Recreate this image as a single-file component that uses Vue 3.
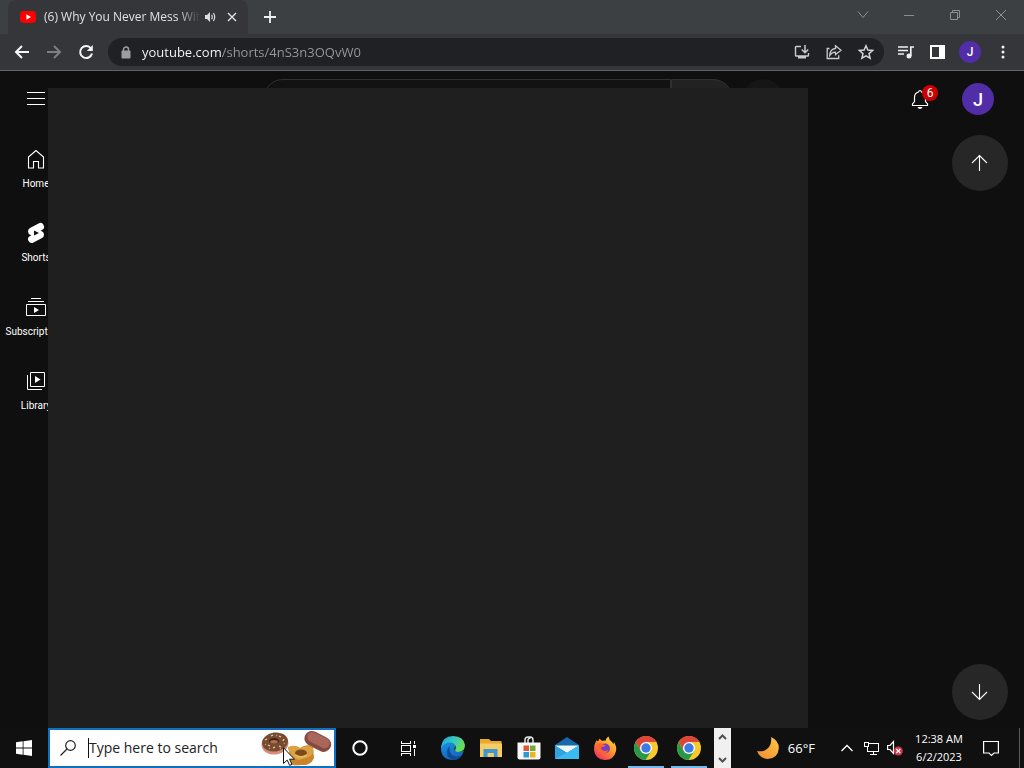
<script setup>
import { ref } from 'vue'

const url = ref('youtube.com/shorts/4nS3n3OQvW0')
const query = ref('')
const taskQuery = ref('')
const nav = ['Home', 'Shorts', 'Subscriptions', 'Library']
const browsers = ['Chrome window 1', 'Chrome window 2']
</script>

<template>
  <div class="desktop">
    <header class="tabs">
      <div class="tab">
        <svg class="fav" width="16" height="12" viewBox="0 0 16 12"><rect width="16" height="12" rx="4" fill="#f00" /><path d="M6.4 3.3 11 6 6.4 8.7z" fill="#fff" /></svg>
        <span class="tab-title">(6) Why You Never Mess With</span>
        <button class="plain" aria-label="Mute tab">
          <svg width="12" height="12" viewBox="0 0 12 12"><path d="M1 4h2l3-3v10L3 8H1z" fill="#dcdde0" /><path d="M7.6 3.8q1.4 2.2 0 4.4M9.4 2q2.6 4 0 8" fill="none" stroke="#dcdde0" stroke-width="1.2" /></svg>
        </button>
        <button class="plain close" aria-label="Close tab">
          <svg width="10" height="10" viewBox="0 0 10 10"><path d="M1 1l8 8M9 1L1 9" stroke="#e2e3e5" stroke-width="1.4" /></svg>
        </button>
      </div>
      <button class="plain plus" aria-label="New tab">
        <svg width="12" height="12" viewBox="0 0 12 12"><path d="M6 0v12M0 6h12" stroke="#eef0f1" stroke-width="1.8" /></svg>
      </button>
      <div class="win">
        <button class="plain" aria-label="Search tabs"><svg width="12" height="12" viewBox="0 0 12 12"><path d="M1 2.5l5 6 5-6" /></svg></button>
        <button class="plain" aria-label="Minimize"><svg width="12" height="12" viewBox="0 0 12 12"><path d="M1 6.5h10" /></svg></button>
        <button class="plain" aria-label="Restore"><svg width="12" height="12" viewBox="0 0 12 12"><path d="M1.5 3.5h7v7h-7zM3.5 3.5v-2h7v7h-2" /></svg></button>
        <button class="plain" aria-label="Close"><svg width="12" height="12" viewBox="0 0 12 12"><path d="M1 1l10 10M11 1L1 11" /></svg></button>
      </div>
    </header>

    <div class="toolbar">
      <button class="plain tool" aria-label="Back"><svg width="16" height="16" viewBox="0 0 16 16"><path d="M15 8H2.5M8 2L2 8l6 6" fill="none" stroke="#f4f5f6" stroke-width="2" /></svg></button>
      <button class="plain tool" aria-label="Forward"><svg width="16" height="16" viewBox="0 0 16 16"><path d="M1 8h12.500M8 2l6 6-6 6" fill="none" stroke="#7d7f83" stroke-width="2" /></svg></button>
      <button class="plain tool" aria-label="Reload"><svg width="16" height="16" viewBox="0 0 16 16"><path d="M13 4.500A6 6 0 1 0 14 9.500" fill="none" stroke="#f4f5f6" stroke-width="2" /><path d="M14.800 1v6h-6z" fill="#f4f5f6" /></svg></button>
      <div class="omni">
        <svg class="lock" width="10" height="13" viewBox="0 0 10 13"><rect x="0.500" y="4.500" width="9" height="8" rx="1" fill="#9b9da1" /><path d="M2.500 5V3.500a2.500 2.500 0 0 1 5 0V5" fill="none" stroke="#9b9da1" stroke-width="1.500" /></svg>
        <input v-model="url" class="url" type="text" aria-label="Address" />
        <button class="plain" aria-label="Install"><svg width="16" height="16" viewBox="0 0 16 16"><path d="M7 2.500H2.200Q1.500 2.500 1.500 3.300v7.900q0 .8.800.8h11.400q.8 0 .8-.8V9" fill="none" stroke="#c9cbce" stroke-width="1.400" /><path d="M4 12h8v2.500H4z" fill="#c9cbce" /><path d="M11 1v7M7.800 5.500L11 8.700l3.200-3.200" fill="none" stroke="#c9cbce" stroke-width="1.500" /></svg></button>
        <button class="plain" aria-label="Share"><svg width="16" height="16" viewBox="0 0 16 16"><path d="M3.500 4.500h-2.300v10h11.500v-3.300" fill="none" stroke="#c9cbce" stroke-width="1.300" /><path d="M9.500 1.800L15 6.300l-5.500 4.400V8.200Q6 8 3.700 11.500 4 5 9.500 4.500z" fill="none" stroke="#c9cbce" stroke-width="1.300" /></svg></button>
        <button class="plain" aria-label="Bookmark"><svg width="16" height="16" viewBox="0 0 16 16"><path d="M8 1.800l1.900 4.300 4.700.4-3.600 3.100 1.100 4.600L8 11.800l-4.100 2.400L5 9.600 1.400 6.500l4.700-.4z" fill="none" stroke="#d4d5d8" stroke-width="1.500" /></svg></button>
      </div>
      <div class="ext">
        <button class="plain" aria-label="Media"><svg width="16" height="14" viewBox="0 0 16 14"><path d="M0 2h10M0 5.500h10M0 9h6M12.800 11V2H16" fill="none" stroke="#f0f1f2" stroke-width="1.700" /><circle cx="11" cy="11" r="2.500" fill="#f0f1f2" /></svg></button>
        <button class="plain" aria-label="Side panel"><svg width="15" height="14" viewBox="0 0 15 14"><path d="M1 1h13v12H1z" fill="none" stroke="#fff" stroke-width="2" /><path d="M9 1h5v12H9z" fill="#fff" /></svg></button>
        <button class="plain me small" aria-label="Profile">J</button>
        <button class="plain" aria-label="More"><svg width="4" height="14" viewBox="0 0 4 14" fill="#f0f1f2"><circle cx="2" cy="2" r="1.500" /><circle cx="2" cy="7" r="1.500" /><circle cx="2" cy="12" r="1.500" /></svg></button>
      </div>
    </div>

    <main class="page">
      <div class="mast">
        <button class="plain menu" aria-label="Menu"><svg width="18" height="14" viewBox="0 0 18 14"><path d="M0 .5h18M0 6.500h18M0 12.500h18" stroke="#fff" stroke-width="1" shape-rendering="crispEdges" /></svg></button>
        <form class="search" @submit.prevent>
          <input v-model="query" type="text" aria-label="Search videos" />
          <button aria-label="Search"></button>
        </form>
        <button class="plain mic" aria-label="Voice search"></button>
        <button class="plain bell" aria-label="Notifications">
          <svg width="18" height="20" viewBox="0 0 18 20"><path d="M1.500 16.500V15l2-2.500V8.500q0-4.500 4-5.500Q8 1.500 9 1.500t1.500 1.500q4 1 4 5.500v4l2 2.500v1.500z" fill="none" stroke="#fff" stroke-width="1.200" /><path d="M6.500 18h5q-.7 2-2.500 2t-2.500-2z" fill="#fff" /></svg>
          <span class="badge">6</span>
        </button>
        <button class="plain me" aria-label="Account">J</button>
      </div>
      <div class="body">
        <nav class="side">
          <a v-for="(n, i) in nav" :key="n" href="#">
            <svg width="24" height="24" viewBox="0 0 24 24" fill="none" stroke="#fff">
              <path v-if="i === 0" d="M12 3.500l-7.500 6.500v11h5v-6.500h5v6.500h5V10z" stroke-width="1.100" />
              <template v-else-if="i === 1"><path d="M17.770 10.320l-1.200-.5L18 9.060a3.740 3.740 0 0 0-3.500-6.620L6 6.940a3.740 3.740 0 0 0 .23 6.740l1.200.49L6 14.930a3.750 3.750 0 0 0 3.500 6.630l8.500-4.500a3.740 3.740 0 0 0-.23-6.740z" fill="#fff" stroke="none" /><path d="M10 14.500v-5l5 2.500z" fill="#111" stroke="none" /></template>
              <template v-else-if="i === 2"><path d="M7 3.500h10M4 6.500h16M2.500 9.500h19v11h-19z" /><path d="M10 18v-6l5 3z" fill="#fff" stroke="none" /></template>
              <template v-else><path d="M6.500 3.500h14v14h-14zM3.500 6v14.500H18" /><path d="M11 14V7l5.500 3.500z" fill="#fff" stroke="none" /></template>
            </svg>
            <span>{{ n }}</span>
          </a>
        </nav>
        <div class="jump">
          <button class="plain" aria-label="Previous video"><svg width="24" height="24" viewBox="0 0 24 24"><path d="M11.500 20V4.500M4 12l7.500-7.500L19 12" /></svg></button>
          <button class="plain" aria-label="Next video"><svg width="24" height="24" viewBox="0 0 24 24"><path d="M11.500 4v15.500M4 12l7.500 7.500L19 12" /></svg></button>
        </div>
      </div>
      <div class="flyout"></div>
    </main>

    <footer class="task">
      <button class="plain start" aria-label="Start"><svg width="16" height="16" viewBox="0 0 16 16"><path d="M0 2.300L6.700 1.300v6.300H0zM7.500 1.200L16 0v7.600H7.500zM0 8.400h6.700v6.300L0 13.700zM7.500 8.400H16V16l-8.500-1.200z" fill="#fff" /></svg></button>
      <div class="find">
        <svg class="glass" width="16" height="16" viewBox="0 0 16 16"><circle cx="10.500" cy="5.500" r="4.800" fill="none" stroke="#222" stroke-width="1.200" /><path d="M7 9L.500 15.500" stroke="#222" stroke-width="1.200" /></svg>
        <input v-model="taskQuery" type="text" placeholder="Type here to search" aria-label="Type here to search" />
        <svg class="treats" width="74" height="36" viewBox="0 0 74 36">
          <ellipse cx="15" cy="14" rx="13.500" ry="10.500" fill="#d78b78" transform="rotate(-8 15 14)" />
          <ellipse cx="15" cy="12" rx="13" ry="9.500" fill="#7a4a30" transform="rotate(-8 15 12)" />
          <ellipse cx="14" cy="11" rx="5" ry="3" fill="#40241a" />
          <ellipse cx="14" cy="11.800" rx="3.800" ry="1.900" fill="#a9744e" />
          <path d="M5 10l2-1M8 15l2 1M19 6l2 1M23 11l1-2M13 18l2-1M11 6l2-1M19 16l2 1" stroke="#e9d68b" stroke-width="1.300" />
          <path d="M5 14l1 1M24 14l1-1M16 5l1 1M20 19l1-1M9 18l1 1" stroke="#6fae9a" stroke-width="1.300" />
          <rect x="44" y="4" width="28" height="15" rx="7.500" fill="#86483f" transform="rotate(27 58 11)" />
          <rect x="46" y="5" width="24" height="10" rx="5" fill="#a9665b" transform="rotate(27 58 11)" />
          <path d="M28 18q6-4 12 0 7-5 13-1l1 11q-3 8-13 7-12 2-14-7 4-3 1-10z" fill="#c9852c" />
          <path d="M28 17q7-3 12 1 7-4 13 0 2 6-4 9l-10 3q-9-1-11-13z" fill="#dba244" />
          <ellipse cx="41" cy="23" rx="6" ry="3.500" fill="#7c4b18" /><path d="M35 25q6 4 12 0" fill="none" stroke="#e9b85c" stroke-width="2" />
        </svg>
        <svg class="pointer" width="12" height="19" viewBox="0 0 12 19"><path d="M.500 .800v15.700l3.700-3.400 2.500 5.300 2.300-1-2.400-5.200h4.900z" fill="#fff" stroke="#111" /></svg>
      </div>
      <button class="plain wide" aria-label="Cortana"><svg width="16" height="16" viewBox="0 0 16 16"><circle cx="8" cy="8" r="6.700" fill="none" stroke="#fff" stroke-width="2" /></svg></button>
      <button class="plain wide" aria-label="Task view"><svg width="17" height="17" viewBox="0 0 17 17" fill="none" stroke="#fff" shape-rendering="crispEdges"><path d="M1.500 1v2.500h9V1M1.500 16v-2.500h9V16M1.500 5.500h9v6h-9zM14.500 1v3M14.500 9v7" /><path d="M13 5h3v3h-3z" fill="#fff" stroke="none" /></svg></button>
      <div class="apps">
        <button class="plain" aria-label="Edge"><svg width="24" height="24" viewBox="0 0 24 24">
          <defs>
            <linearGradient id="eg" x1="0" y1="0" x2="1" y2="0.500"><stop offset="0" stop-color="#1c9fe0" /><stop offset="0.500" stop-color="#36c6c5" /><stop offset="1" stop-color="#6ade54" /></linearGradient>
            <linearGradient id="eb" x1="0" y1="0" x2="0.400" y2="1"><stop offset="0" stop-color="#1b94e0" /><stop offset="1" stop-color="#1464c0" /></linearGradient>
          </defs>
          <path d="M0 12Q0 6 6 5.500q7 0 9 4-3 3-.5 5.500 4 2 8.500-.5-3 9.500-11 9.500Q0 24 0 12z" fill="url(#eb)" />
          <path d="M0 11Q1.500 0 12 0q11 .5 12 9 0 7-7 7-4-.5-2.500-3Q16 8 10 6.500 3 6 0 12z" fill="url(#eg)" />
          <path d="M9 10q-2 6 3 9.500 4 2.500 9-.5-3 5-9 5-6.500-2-6-8 .3-4 3-6z" fill="#0e4b91" />
        </svg></button>
        <button class="plain" aria-label="File Explorer"><svg width="22" height="20" viewBox="0 0 22 20"><path d="M0 1h9l2 2h10.500v16H0z" fill="#eaa92f" /><path d="M0 5.500h22V19H0z" fill="#f5cd62" /><path d="M3.500 11h14v8h-3.700v-4H7.500v4h-4z" fill="#3e96d7" /></svg></button>
        <button class="plain" aria-label="Store"><svg width="24" height="24" viewBox="0 0 24 24"><path d="M8 8V4q0-3 3-3h2q3 0 3 3v4M11 7V4q0-1.500 2.500-2" fill="none" stroke="#dce4e8" stroke-width="1.500" /><path d="M.5 6.500h23v15q0 2-2 2h-19q-2 0-2-2z" fill="#f7f8f7" /><path d="M6.500 9.500H12V15H6.500z" fill="#dc5638" /><path d="M13 9.500h5.500V15H13z" fill="#75a932" /><path d="M6.500 16H12v5.500H6.500z" fill="#299bd6" /><path d="M13 16h5.500v5.500H13z" fill="#edb41d" /></svg></button>
        <button class="plain" aria-label="Mail"><svg width="24" height="24" viewBox="0 0 24 24"><path d="M0 9L12 1l12 8v14H0z" fill="#1769ab" /><path d="M0 9.500h24L12 17z" fill="#eef7fc" /><path d="M0 9.500L12 17l12-7.500V23H0z" fill="#2da3e3" /><path d="M0 23l14-7.500L24 9.500V23z" fill="#3bbcf0" /></svg></button>
        <button class="plain" aria-label="Firefox"><svg width="24" height="24" viewBox="0 0 24 24">
          <defs><linearGradient id="ff" x1="1" y1="0" x2="0.200" y2="1"><stop offset="0" stop-color="#fff14d" /><stop offset="0.450" stop-color="#ff9d28" /><stop offset="1" stop-color="#f32b63" /></linearGradient></defs>
          <path d="M5 5q1-.5 1.500-2.500L9 5q2-.7 3.500-.2Q13 2 15.500.500 16 4 19 6q1 1 1.300 2.500L21 6q3 5 2 9-2 9-11 9Q2 23.500 1 14 .500 9 3.500 4q.2 1.500 1.500 1z" fill="url(#ff)" /><circle cx="12" cy="12.500" r="5" fill="#7740bd" /><path d="M4 8q3-1.500 5.500 0l3 1.500q-1 1.500-3.500 1.500-2 1 0 3 3 2 6 0-1 4-5 4-5-1-6-10z" fill="#ff642f" />
        </svg></button>
        <button v-for="b in browsers" :key="b" class="plain open" :aria-label="b"><svg width="24" height="24" viewBox="0 0 24 24"><circle cx="12" cy="12" r="12" fill="#f7c92d" /><path d="M1.600 6A12 12 0 0 1 22.400 6H12L7 15z" fill="#de4437" /><path d="M1.600 6A12 12 0 0 0 11.500 24L17.200 15H6.800z" fill="#28994b" /><circle cx="12" cy="12" r="6" fill="#fff" /><circle cx="12" cy="12" r="4.700" fill="#3c7be5" /></svg></button>
      </div>
      <div class="spin">
        <button class="plain" aria-label="Scroll up"><svg width="9" height="6" viewBox="0 0 9 6"><path d="M1 5l3.500-3.500L8 5" /></svg></button>
        <button class="plain" aria-label="Scroll down"><svg width="9" height="6" viewBox="0 0 9 6"><path d="M1 1l3.500 3.500L8 1" /></svg></button>
      </div>
      <div class="tray">
        <button class="plain weather"><svg width="22" height="22" viewBox="0 0 22 22"><defs><linearGradient id="mn" x1="1" y1="0" x2="0" y2="1"><stop offset="0" stop-color="#ffc94d" /><stop offset="1" stop-color="#ef8a2c" /></linearGradient></defs><path d="M14 0q8 3.500 7.800 11.500-1 10-11 10.500Q3 21.500 0 14q8 1.500 12-4 3-4.500 2-10z" fill="url(#mn)" /></svg><span>66°F</span></button>
        <button class="plain up" aria-label="Hidden icons"><svg width="12" height="8" viewBox="0 0 12 8"><path d="M0.500 7L6 1.500 11.500 7" fill="none" stroke="#fff" stroke-width="1.300" /></svg></button>
        <button class="plain net" aria-label="Network"><svg width="17" height="14" viewBox="0 0 17 14" fill="none" stroke="#fff" shape-rendering="crispEdges"><path d="M6 2.500h9.500v8h-11V6M10.500 11v2M7 13.500h7M1.500 1.500h4v4h-4z" /></svg></button>
        <button class="plain vol" aria-label="Volume muted"><svg width="16" height="16" viewBox="0 0 16 16"><path d="M.600 5.500h2.400l3.500-4v12L3 9.500H.600z" fill="none" stroke="#fff" stroke-width="1.200" /><circle cx="11.300" cy="11" r="4.500" fill="#cf364a" /><path d="M9.300 9l4 4M13.300 9l-4 4" stroke="#fff" stroke-width="1.200" /></svg></button>
        <button class="plain clock"><span>12:38 AM</span><span>6/2/2023</span></button>
        <button class="plain note" aria-label="Notification center"><svg width="16" height="17" viewBox="0 0 16 17"><path d="M.600 1.500h14.800v11.500H11l-2.500 2.500L6 13H.600z" fill="none" stroke="#fff" stroke-width="1.200" /></svg></button>
        <div class="peek"></div>
      </div>
    </footer>
  </div>
</template>

<style>
body { margin: 0; background: #0f0f0f; }
</style>

<style scoped>
* { box-sizing: border-box; }
.desktop { display: flex; flex-direction: column; min-height: 100vh; background: #0f0f0f; color: #fff; font-family: "Open Sans", "Noto Sans", sans-serif; overflow: hidden; }
svg { display: block; flex: none; }
.plain { display: flex; align-items: center; justify-content: center; flex: none; margin: 0; padding: 0; border: 0; background: none; color: inherit; font: inherit; }
input { min-width: 0; margin: 0; padding: 0; border: 0; outline: 0; background: none; font: inherit; }

.tabs { display: flex; height: 34px; padding-left: 8px; background: #3c4043; }
.tab { display: flex; align-items: center; width: 240px; padding: 0 11px 0 12px; background: #35363a; border-radius: 8px 8px 0 0; }
.tab-title { flex: 1; margin: 0 4px 0 8px; overflow: hidden; white-space: nowrap; font-size: 12px; line-height: 16px; color: #dfe0e3; mask-image: linear-gradient(90deg, #000 86%, transparent); }
.close { margin-left: 11px; }
.plus { width: 44px; }
.win { display: flex; margin-left: auto; height: 29px; }
.win button { width: 46px; }
.win svg { fill: none; stroke: #8b8e92; stroke-width: 1; }

.toolbar { display: flex; align-items: center; height: 37px; padding-left: 6px; background: #35363a; border-bottom: 1px solid #626366; }
.tool { width: 32px; height: 28px; }
.omni { display: flex; align-items: center; gap: 16px; flex: 1; height: 28px; margin-left: 6px; padding: 0 10px 0 13px; border-radius: 14px; background: #202124; }
.lock { margin-right: -5px; }
.url { flex: 1; font-size: 13px; line-height: 20px; color: transparent; background: linear-gradient(90deg, #fff 80px, #96999d 80px); background-clip: text; }
.ext { display: flex; align-items: center; gap: 16px; width: 140px; padding-left: 14px; }
.me { width: 32px; height: 32px; border-radius: 50%; background: #512da8; font-family: Roboto, sans-serif; font-size: 18px; font-weight: 500; }
.me.small { width: 22px; height: 22px; margin: 0 4px 0 -2px; font-size: 12px; }

.page { position: relative; display: flex; flex-direction: column; flex: 1; }
.mast { display: flex; align-items: center; height: 56px; padding: 0 30px 0 16px; }
.menu { width: 40px; height: 40px; }
.search { display: flex; flex: 0 1 470px; height: 40px; margin-left: 207px; }
.search input { flex: 1; border: 1px solid #303030; border-radius: 20px 0 0 20px; background: #121212; color: #fff; }
.search button { width: 62px; border: 1px solid #303030; border-radius: 0 20px 20px 0; background: #222; }
.mic { width: 40px; height: 40px; margin-left: 10px; border-radius: 50%; background: #161616; }
.bell { position: relative; width: 40px; height: 40px; margin-left: auto; margin-right: 22px; }
.badge { position: absolute; left: 22px; top: 6px; width: 16px; height: 16px; border-radius: 50%; background: #c00; font: 12px/16px Roboto, sans-serif; text-align: center; }
.body { display: flex; flex: 1; justify-content: space-between; }
.side { width: 72px; padding-top: 4px; }
.side a { display: flex; flex-direction: column; align-items: center; height: 74px; padding-top: 16px; gap: 6px; color: #fff; text-decoration: none; font: 10px/14px Roboto, sans-serif; }
.jump { display: flex; flex-direction: column; justify-content: space-between; padding: 8px 16px; }
.jump button { width: 56px; height: 56px; border-radius: 50%; background: #272727; }
.jump path { fill: none; stroke: #fff; stroke-width: 1.1; }
.flyout { position: absolute; left: 48px; right: 216px; top: 17px; bottom: 0; background: #1f1f1f; }

.task { display: flex; height: 40px; background: #101010; }
.start { width: 48px; }
.find { position: relative; display: flex; align-items: center; flex: 0 1 288px; min-width: 0; border: 2px solid #0f6fc0; background: #fff; }
.glass { margin: 0 11px 0 10px; }
.find input { flex: 1; width: 0; height: 20px; margin-left: 1px; border-left: 1px solid #111; color: #222; font-size: 14px; line-height: 20px; }
.find input::placeholder { color: #222; opacity: 1; }
.pointer { position: absolute; left: 233px; top: 17px; }
.wide { width: 48px; }
.apps { display: flex; padding-left: 2px; }
.apps button { width: 38px; }
.apps .open { width: 43px; background: linear-gradient(#76b9ed, #76b9ed) center bottom / 36px 2px no-repeat; }
.spin { display: flex; flex-direction: column; justify-content: space-between; width: 17px; margin-left: 4px; background: #f0f0f0; }
.spin button { width: 17px; height: 17px; }
.spin path { fill: none; stroke: #505050; stroke-width: 2; }
.tray { display: flex; align-items: stretch; margin-left: auto; }
.weather { gap: 9px; margin-right: 26px; font-size: 13px; }
.up { width: 12px; }
.net { width: 17px; margin-left: 10px; }
.vol { width: 16px; margin-left: 7px; }
.clock { flex-direction: column; width: 62px; margin-left: 5px; font-size: 11px; line-height: 18px; white-space: nowrap; }
.note { width: 42px; margin-right: 7px; }
.peek { width: 5px; border-left: 1px solid #5a5a5a; }
</style>
